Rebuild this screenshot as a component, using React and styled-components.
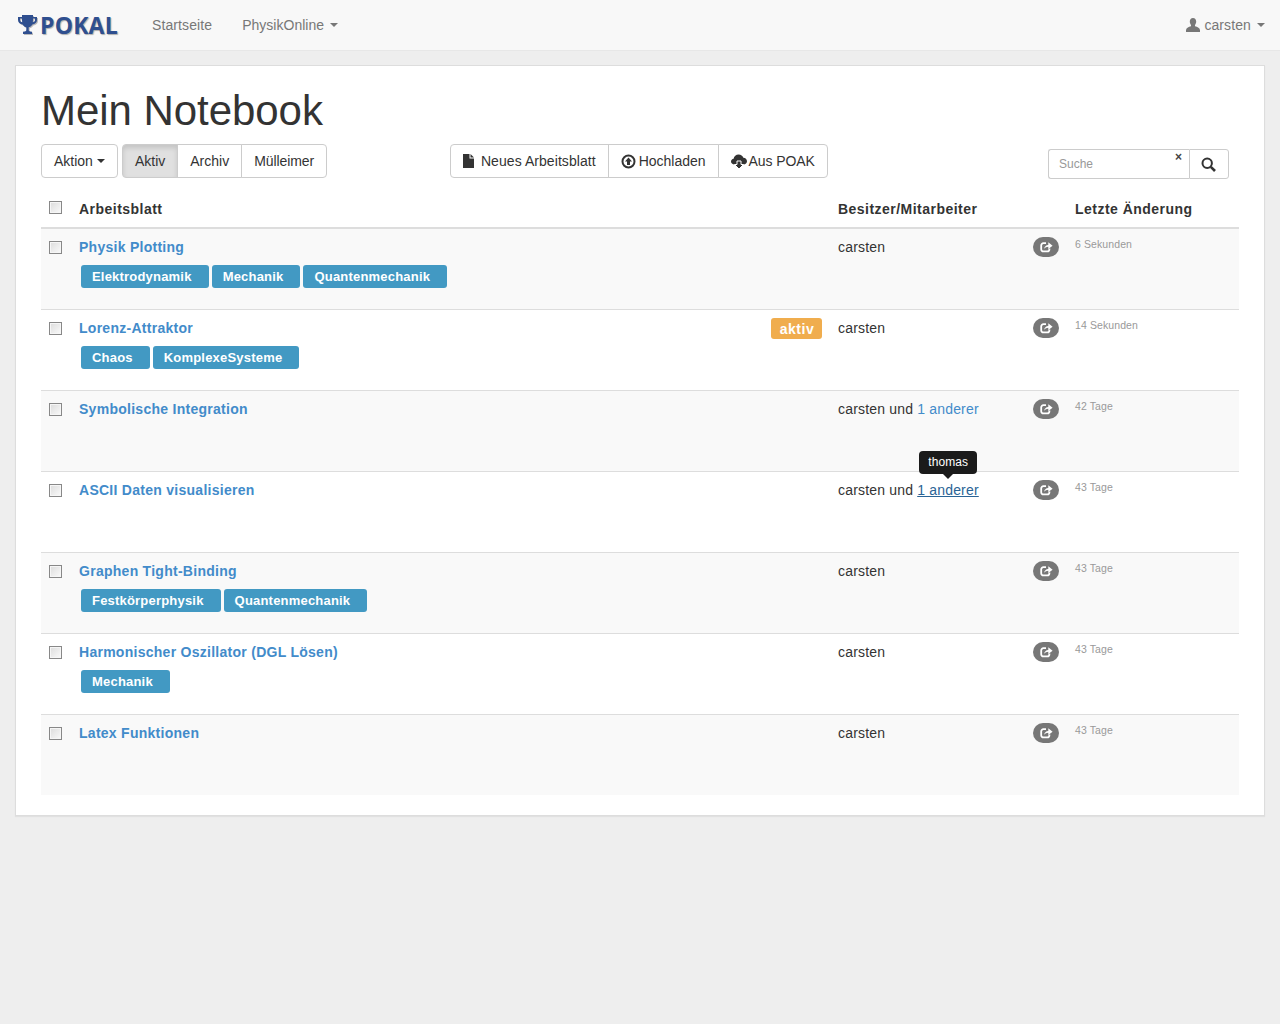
import React from "react";
import styled, { createGlobalStyle } from "styled-components";

const Global = createGlobalStyle`
  html, body { margin: 0; padding: 0; }
  body { background: #eee; font-family: "Liberation Sans", Arial, sans-serif; font-size: 14px; line-height: 20px; color: #333; min-height: 1024px; }
  * { box-sizing: border-box; }
`;

const Navbar = styled.nav`
  height: 51px; background: #f8f8f8; border-bottom: 1px solid #e7e7e7;
  display: flex; align-items: center; padding: 0 15px 0 18px; color: #777;
`;
const Brand = styled.div`
  display: flex; align-items: center; gap: 3px; width: 134px; color: #2f4f8f;
  font-family: "Open Sans", sans-serif; font-weight: 700; font-size: 23px; letter-spacing: .2px;
  text-shadow: 1px 1px 1px rgba(0,0,0,.3);
  svg { filter: drop-shadow(1px 1px 0 rgba(0,0,0,.25)); }
`;
const NavLink = styled.span`
  margin-right: 30px; display: inline-flex; align-items: center; gap: 6px; letter-spacing: ${p => p.$ls || 0}px; ${p => p.$end && "margin: 0 0 0 auto;"}
`;
const Caret = styled.i`
  display: inline-block; width: 0; height: 0; margin-left: ${p => p.$gap ?? 0}px;
  border-top: 4px solid currentColor; border-left: 4px solid transparent; border-right: 4px solid transparent;
`;
const Panel = styled.main`
  margin: 14px 15px 0; height: 751px; background: #fff; border: 1px solid #ddd; padding: 20px 25px;
  box-shadow: 0 1px 1px rgba(0,0,0,.05);
`;
const Title = styled.h1`
  margin: 0; font-size: 42px; font-weight: 400; line-height: 50px; height: 58px; color: #333; letter-spacing: -.05px;
`;
const Toolbar = styled.div`display: flex; align-items: flex-start; height: 34px;`;
const Group = styled.div`display: flex; margin-left: ${p => p.$ml || 0}px;`;
const Btn = styled.div`
  height: 34px; padding: 0 12px; border: 1px solid #ccc; margin-left: -1px; background: ${p => p.$active ? "#e0e0e0" : "#fff"};
  display: flex; align-items: center; gap: 3px; color: #333; white-space: nowrap; letter-spacing: ${p => p.$ls || 0}px;
  box-shadow: ${p => p.$active ? "inset 0 3px 5px rgba(0,0,0,.125)" : "none"};
  &:first-child { margin-left: 0; border-radius: 4px 0 0 4px; }
  &:last-child { border-radius: 0 4px 4px 0; }
  &:only-child { border-radius: 4px; }
  svg { flex: none; }
`;
const Search = styled.div`display: flex; margin: 5px 10px 0 auto; height: 30px;`;
const SearchBox = styled.div`
  position: relative; width: 141px; height: 30px; border: 1px solid #ccc; border-right: 0; border-radius: 3px 0 0 3px;
  font-size: 12px; color: #999; padding: 4px 10px;
`;
const Clear = styled.span`position: absolute; right: 7px; top: -3px; font-size: 12px; font-weight: 700; color: #444;`;
const SearchBtn = styled.div`
  width: 40px; padding-right: 1px; border: 1px solid #ccc; border-radius: 0 3px 3px 0; display: flex; align-items: center; justify-content: center; color: #333;
`;
const Row = styled.div`
  display: grid; grid-template-columns: 38px 759px 237px 164px;
  height: ${p => p.$head ? 51 : p.$first ? 80 : 81}px; padding-top: ${p => p.$head ? 21 : 8}px;
  border-top: ${p => p.$first || p.$head ? "0" : "1px solid #ddd"};
  border-bottom: ${p => p.$head ? "2px solid #ddd" : "0"};
  background: ${p => p.$odd ? "#f9f9f9" : "transparent"};
`;
const Box = styled.input.attrs({ type: "checkbox" })`
  appearance: none; display: block; width: 13px; height: 13px; margin: ${p => p.$head ? 2 : 4}px 0 0 8px; border: 1px solid #888; border-radius: 0;
  background: linear-gradient(135deg, #dcdcdc, #fafafa); box-shadow: inset 0 0 0 1px #f6f6f6;
`;
const Head = styled.div`font-weight: 700; letter-spacing: .47px; color: #333;`;
const NameCell = styled.div`display: flex; flex-wrap: wrap; align-content: flex-start; padding-right: 16px;`;
const Name = styled.a`font-weight: 700; color: #428bca; letter-spacing: .27px;`;
const Active = styled.span`
  margin: 0 0 -1px auto; height: 21px; width: 51px; border-radius: 3px; background: #f0ad4e; color: #fff; font-weight: 700; letter-spacing: .5px; padding-left: 1px;
  display: flex; align-items: center; justify-content: center;
`;
const Tags = styled.div`flex: 0 0 100%; display: flex; gap: 3px; padding: 8px 0 0 2px;`;
const Tag = styled.span`
  height: 23px; padding: 0 17px 0 11px; background: #4299c3; border-radius: 3px; color: #fff; font-weight: 700;
  letter-spacing: .2px; font-size: 13px; line-height: 23px;
`;
const OwnerCell = styled.div`display: flex; align-items: flex-start; justify-content: space-between; padding-right: 16px;`;
const Owner = styled.div`color: #333; letter-spacing: .18px;`;
const Others = styled.a`
  position: relative; color: ${p => p.$hover ? "#2a6496" : "#428bca"}; text-decoration: ${p => p.$hover ? "underline" : "none"};
`;
const Tip = styled.span`
  position: absolute; left: 2px; top: -31px; width: 58px; height: 23px; background: #1b1b1b; color: #fff; border-radius: 4px;
  font-size: 12px; line-height: 23px; text-align: center; letter-spacing: .1px;
  &::after { content: ""; position: absolute; left: 24px; top: 23px; border-top: 5px solid #1b1b1b; border-left: 5px solid transparent; border-right: 5px solid transparent; }
`;
const Share = styled.span`
  width: 26px; height: 20px; border-radius: 10px; background: #777; color: #fff; display: flex; align-items: center; justify-content: center;
`;
const Time = styled.div`font-size: 10.5px; line-height: 14px; color: #999; letter-spacing: .1px;`;

const rows = [
  { n: "Physik Plotting", t: ["Elektrodynamik", "Mechanik", "Quantenmechanik"], d: "6 Sekunden" },
  { n: "Lorenz-Attraktor", t: ["Chaos", "KomplexeSysteme"], d: "14 Sekunden", a: true },
  { n: "Symbolische Integration", t: [], d: "42 Tage", o: true },
  { n: "ASCII Daten visualisieren", t: [], d: "43 Tage", o: true, h: true },
  { n: "Graphen Tight-Binding", t: ["Festkörperphysik", "Quantenmechanik"], d: "43 Tage" },
  { n: "Harmonischer Oszillator (DGL Lösen)", t: ["Mechanik"], d: "43 Tage" },
  { n: "Latex Funktionen", t: [], d: "43 Tage" },
];

const Trophy = () => (
  <svg width="19" height="20" viewBox="0 0 19 20" fill="#2f4f8f">
    <path d="M4 0h11v2h4v3c0 2.500-2 4.200-4.600 4.400C13.500 11 12 12 10.700 12.300V15c0 1 1 1.500 3.300 1.800V19H5v-2.200c2.300-.3 3.300-.8 3.300-1.800v-2.700C7 12 5.500 11 4.600 9.400 2 9.200 0 7.500 0 5V2h4V0zM2 3.500V5c0 1.200.9 2 2.200 2.300-.2-1-.2-2.500-.2-3.800H2zm15 0h-2c0 1.300 0 2.800-.2 3.800C16.100 7 17 6.200 17 5V3.500z" fillRule="evenodd" />
  </svg>
);
const FileIcon = () => (
  <svg width="11" height="14" viewBox="0 0 11 14" fill="#333" style={{ marginRight: 4 }}>
    <path d="M0 0h6.500v4.500H11V14H0z" /><path d="M7.500 0L11 3.500H7.500z" />
  </svg>
);
const UploadIcon = () => (
  <svg width="15" height="15" viewBox="0 0 15 15" fill="none">
    <circle cx="7.500" cy="7.500" r="6" stroke="#333" strokeWidth="2" />
    <path d="M7.500 3.500L11 7.500H9V11H6V7.500H4z" fill="#333" />
  </svg>
);
const CloudIcon = () => (
  <svg width="16" height="15" viewBox="0 0 16 15" style={{ marginRight: -1 }}>
    <path d="M3.500 10.500C1.500 10.500 0 9.300 0 7.600c0-1.500 1.100-2.600 2.600-2.800C3 2.400 5 .5 7.600.5c2.300 0 4.200 1.400 4.800 3.300 2 .1 3.600 1.700 3.600 3.500 0 1.800-1.500 3.200-3.500 3.200z" fill="#333" />
    <path d="M6 7h4v3.500h2.500L8 15l-4.500-4.500H6z" fill="#333" stroke="#fff" strokeWidth="1" />
  </svg>
);
const UserIcon = () => (
  <svg width="14" height="14" viewBox="0 0 14 14" fill="#777" style={{ marginRight: -2 }}>
    <path d="M7 0c2 0 3.200 1.600 3.200 3.600 0 1.300-.5 2.500-1.200 3.300-.2.800.1 1.300 1 1.700 1.700.7 3.500 1.300 4 3.400V14H0v-2c.5-2.100 2.300-2.700 4-3.400.9-.4 1.200-.9 1-1.700-.7-.8-1.200-2-1.200-3.300C3.800 1.600 5 0 7 0z" />
  </svg>
);
const SearchIcon = () => (
  <svg width="15" height="15" viewBox="0 0 15 15" fill="none" stroke="#333">
    <circle cx="6.200" cy="6.200" r="4.700" strokeWidth="2" />
    <path d="M9.800 9.800L14 14" strokeWidth="2.600" />
  </svg>
);
const ShareIcon = () => (
  <svg width="13" height="12" viewBox="0 0 13 12" fill="none">
    <path d="M6 2.200H3.400A2.200 2.200 0 0 0 1.200 4.400v3.800a2.200 2.200 0 0 0 2.200 2.200h3.800a2.200 2.200 0 0 0 2.200-2.200V7.500" stroke="#fff" strokeWidth="1.800" />
    <path d="M4.200 7.800C4.400 5.500 6 4 8.300 3.900V1.300L12.600 4.700 8.300 8V5.700C6.500 5.700 5.200 6.400 4.200 7.800z" fill="#fff" />
  </svg>
);

export default function App() {
  return (
    <>
      <Global />
      <Navbar>
        <Brand><Trophy />POKAL</Brand>
        <NavLink $ls={.1}>Startseite</NavLink>
        <NavLink $ls={.02}>PhysikOnline <Caret $gap={0} /></NavLink>
        <NavLink $end $ls={.1}><UserIcon />carsten <Caret /></NavLink>
      </Navbar>
      <Panel>
        <Title>Mein Notebook</Title>
        <Toolbar>
          <Group><Btn>Aktion <Caret $gap={1} /></Btn></Group>
          <Group $ml={4}><Btn $active>Aktiv</Btn><Btn>Archiv</Btn><Btn $ls={-.1}>Mülleimer</Btn></Group>
          <Group $ml={123}>
            <Btn $ls={.06}><FileIcon />Neues Arbeitsblatt</Btn>
            <Btn><UploadIcon />Hochladen</Btn>
            <Btn $ls={-.1}><CloudIcon />Aus POAK</Btn>
          </Group>
          <Search>
            <SearchBox>Suche<Clear>×</Clear></SearchBox>
            <SearchBtn><SearchIcon /></SearchBtn>
          </Search>
        </Toolbar>
        <Row $head>
          <div><Box $head /></div>
          <Head>Arbeitsblatt</Head>
          <Head>Besitzer/Mitarbeiter</Head>
          <Head>Letzte Änderung</Head>
        </Row>
        {rows.map((r, i) => (
          <Row key={r.n} $odd={i % 2 === 0} $first={i === 0}>
            <div><Box /></div>
            <NameCell>
              <Name>{r.n}</Name>
              {r.a && <Active>aktiv</Active>}
              {r.t.length > 0 && <Tags>{r.t.map(t => <Tag key={t}>{t}</Tag>)}</Tags>}
            </NameCell>
            <OwnerCell>
              <Owner>
                carsten{r.o && <> und <Others $hover={r.h}>1 anderer{r.h && <Tip>thomas</Tip>}</Others></>}
              </Owner>
              <Share><ShareIcon /></Share>
            </OwnerCell>
            <Time>{r.d}</Time>
          </Row>
        ))}
      </Panel>
    </>
  );
}
